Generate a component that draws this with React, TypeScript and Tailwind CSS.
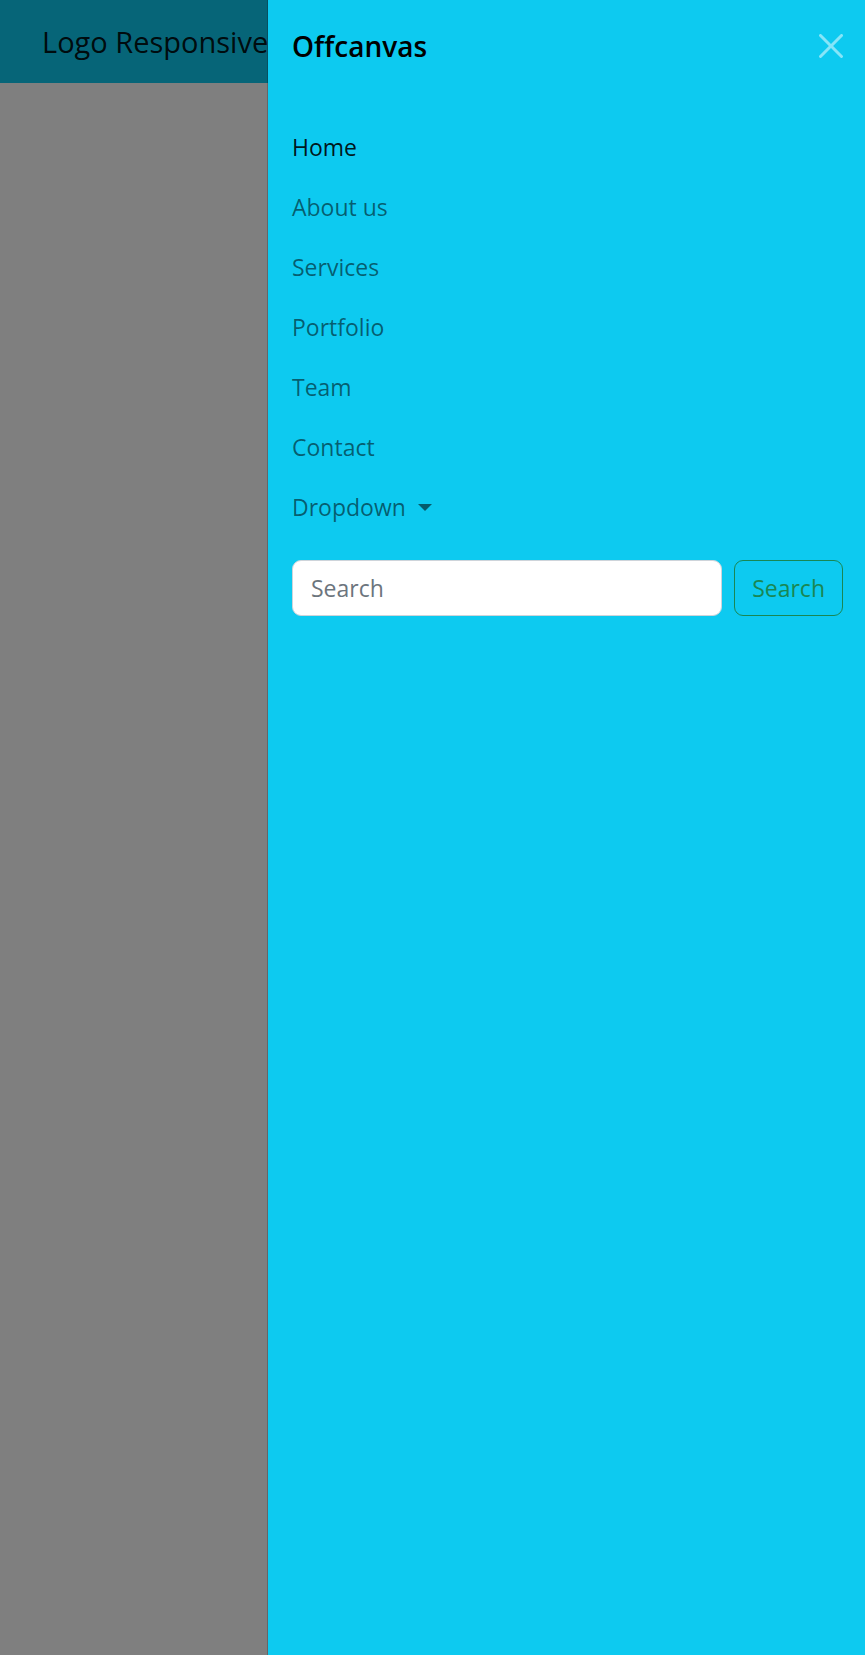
const links = ["Home", "About us", "Services", "Portfolio", "Team", "Contact"];

export default function App() {
  return (
    <div className="min-h-screen bg-white font-['Open_Sans','Noto_Sans',sans-serif]">
      <header className="flex h-[83px] items-center bg-[#0dcaf0] pl-[42px]">
        <a href="#" className="text-[29px] leading-[45px] whitespace-nowrap text-black/90">
          Logo Responsive
        </a>
      </header>

      <div className="fixed inset-0 bg-black/50" />

      <aside
        aria-labelledby="menu-title"
        className="fixed inset-y-0 right-0 flex w-[598px] max-w-full flex-col border-l border-black/20 bg-[#0dcaf0] bg-clip-padding"
      >
        <div className="flex items-center justify-between pt-6 pr-[22px] pl-6">
          <h5 id="menu-title" className="text-[28px] leading-11 font-semibold text-black">
            Offcanvas
          </h5>
          <button type="button" aria-label="Close" className="text-white/50">
            <svg width="24" height="24" viewBox="0 0 16 16" fill="currentColor">
              <path d="M.293.293a1 1 0 0 1 1.414 0L8 6.586 14.293.293a1 1 0 1 1 1.414 1.414L9.414 8l6.293 6.293a1 1 0 0 1-1.414 1.414L8 9.414l-6.293 6.293a1 1 0 0 1-1.414-1.414L6.586 8 .293 1.707a1 1 0 0 1 0-1.414z" />
            </svg>
          </button>
        </div>

        <div className="flex-1 pt-[49px] pr-[22px] pl-6 text-[23px] leading-9">
          <ul>
            {links.map((label, i) => (
              <li key={label}>
                <a href="#" className={i === 0 ? "block py-3 text-black/90" : "block py-3 text-black/55"}>
                  {label}
                </a>
              </li>
            ))}
            <li>
              <button type="button" className="flex items-center gap-3 py-3 text-black/55">
                Dropdown
                <svg width="14" height="7" viewBox="0 0 14 7" fill="currentColor">
                  <path d="M0 0h14L7 7z" />
                </svg>
              </button>
            </li>
          </ul>
          <form className="mt-[23px] flex gap-3" onSubmit={(e) => e.preventDefault()}>
            <input
              type="search"
              aria-label="Search"
              placeholder="Search"
              className="h-14 min-w-0 flex-1 rounded-[9px] border border-[#ced4da] bg-white px-[18px] text-[#212529] placeholder:text-[#6c757d]"
            />
            <button type="submit" className="h-14 rounded-[9px] border border-[#198754] px-[17px] text-[#198754]">
              Search
            </button>
          </form>
        </div>
      </aside>
    </div>
  );
}
